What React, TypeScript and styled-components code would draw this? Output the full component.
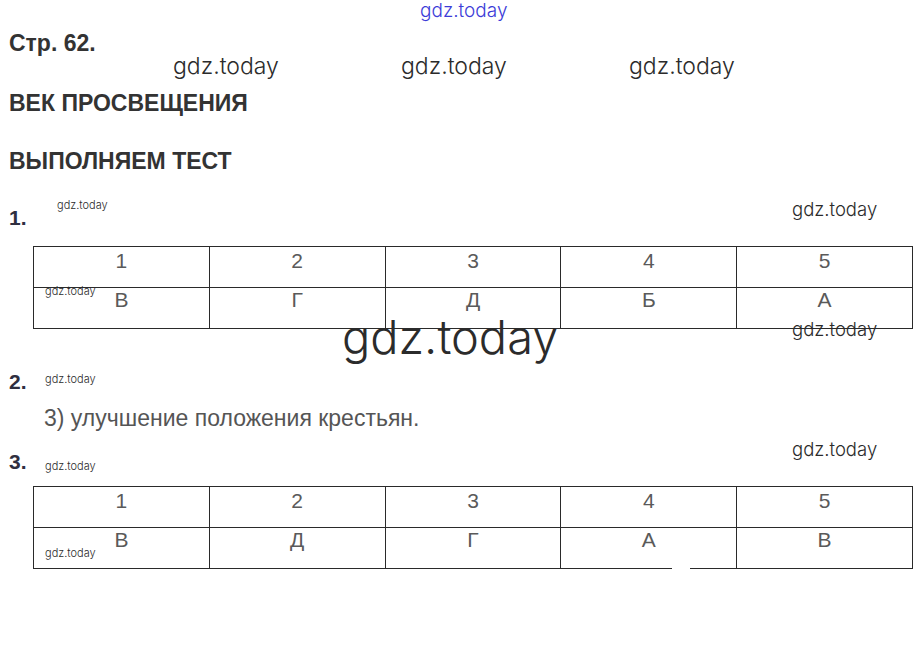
import styled, { createGlobalStyle } from "styled-components";

const GlobalStyle = createGlobalStyle`
  body {
    margin: 0;
    background: #ffffff;
    font-family: "Liberation Sans", Arial, sans-serif;
  }
`;

const table1 = {
  head: ["1", "2", "3", "4", "5"],
  answers: ["В", "Г", "Д", "Б", "А"],
};
const table2 = {
  head: ["1", "2", "3", "4", "5"],
  answers: ["В", "Д", "Г", "А", "В"],
};

type Mark = { x: number; y: number; size: number; blue?: boolean };

const marks: Mark[] = [
  { x: 420, y: 1, size: 19, blue: true },
  { x: 173, y: 55, size: 23 },
  { x: 401, y: 55, size: 23 },
  { x: 629, y: 55, size: 23 },
  { x: 57, y: 200, size: 11 },
  { x: 792, y: 200, size: 18.5 },
  { x: 45, y: 286, size: 11 },
  { x: 342, y: 313, size: 47 },
  { x: 792, y: 320, size: 18.5 },
  { x: 45, y: 374, size: 11 },
  { x: 792, y: 440, size: 18.5 },
  { x: 45, y: 461, size: 11 },
  { x: 45, y: 548, size: 11 },
];

const AnswerTable = ({ head, answers }: { head: string[]; answers: string[] }) => (
  <Table>
    {head.map((h, i) => (
      <Cell key={"h" + i} $pad={3}>
        {h}
      </Cell>
    ))}
    {answers.map((a, i) => (
      <Cell key={"a" + i} $pad={1}>
        {a}
      </Cell>
    ))}
  </Table>
);

const App = () => {
  return (
    <Page>
      <GlobalStyle />
      <PageNum>Стр. 62.</PageNum>
      <Title $top={37}>ВЕК ПРОСВЕЩЕНИЯ</Title>
      <Title $top={35}>ВЫПОЛНЯЕМ ТЕСТ</Title>

      <TaskLabel $top={34}>1.</TaskLabel>
      <TableWrap $top={18}>
        <AnswerTable {...table1} />
      </TableWrap>

      <TaskLabel $top={42}>2.</TaskLabel>
      <Answer>3) улучшение положения крестьян.</Answer>

      <TaskLabel $top={21}>3.</TaskLabel>
      <TableWrap $top={14}>
        <AnswerTable {...table2} />
      </TableWrap>

      {marks.map((m, i) => (
        <Watermark key={i} $x={m.x} $y={m.y} $size={m.size} $blue={m.blue}>
          gdz.today
        </Watermark>
      ))}
      <BorderGap />
    </Page>
  );
};

export default App;

const Page = styled.div`
  position: relative;
  width: 922px;
  height: 646px;
  box-sizing: border-box;
  padding: 32px 9px 0;
  overflow: hidden;
`;

const PageNum = styled.div`
  font-size: 23px;
  line-height: 1;
  font-weight: bold;
  color: #333333;
`;

const Title = styled.div<{ $top: number }>`
  margin-top: ${(p) => p.$top}px;
  font-size: 23px;
  line-height: 1;
  font-weight: bold;
  color: #333333;
`;

const TaskLabel = styled.div<{ $top: number }>`
  margin-top: ${(p) => p.$top}px;
  font-size: 21px;
  line-height: 1;
  font-weight: bold;
  color: #2f2f3f;
`;

const Answer = styled.div`
  margin: 15px 0 0 35px;
  font-size: 23px;
  line-height: 1;
  color: #555555;
`;

const TableWrap = styled.div<{ $top: number }>`
  margin: ${(p) => p.$top}px 0 0 24px;
  width: 880px;
`;

const Table = styled.div`
  display: grid;
  grid-template-columns: repeat(5, 1fr);
  grid-auto-rows: 41px;
  border-top: 1px solid #2a2a2a;
  border-left: 1px solid #2a2a2a;
`;

const Cell = styled.div<{ $pad: number }>`
  box-sizing: border-box;
  border-right: 1px solid #2a2a2a;
  border-bottom: 1px solid #2a2a2a;
  padding-top: ${(p) => p.$pad}px;
  text-align: center;
  font-size: 21px;
  line-height: 1;
  color: #5a5a5a;
`;

const Watermark = styled.div<{ $x: number; $y: number; $size: number; $blue?: boolean }>`
  position: absolute;
  left: ${(p) => p.$x}px;
  top: ${(p) => p.$y}px;
  font-family: Inter, "Open Sans", sans-serif;
  font-weight: 300;
  font-size: ${(p) => p.$size}px;
  line-height: 1;
  white-space: nowrap;
  color: ${(p) => (p.$blue ? "#3c3cd8" : "#2b2b2b")};
`;

const BorderGap = styled.div`
  position: absolute;
  left: 672px;
  top: 566px;
  width: 18px;
  height: 3px;
  background: #ffffff;
`;
